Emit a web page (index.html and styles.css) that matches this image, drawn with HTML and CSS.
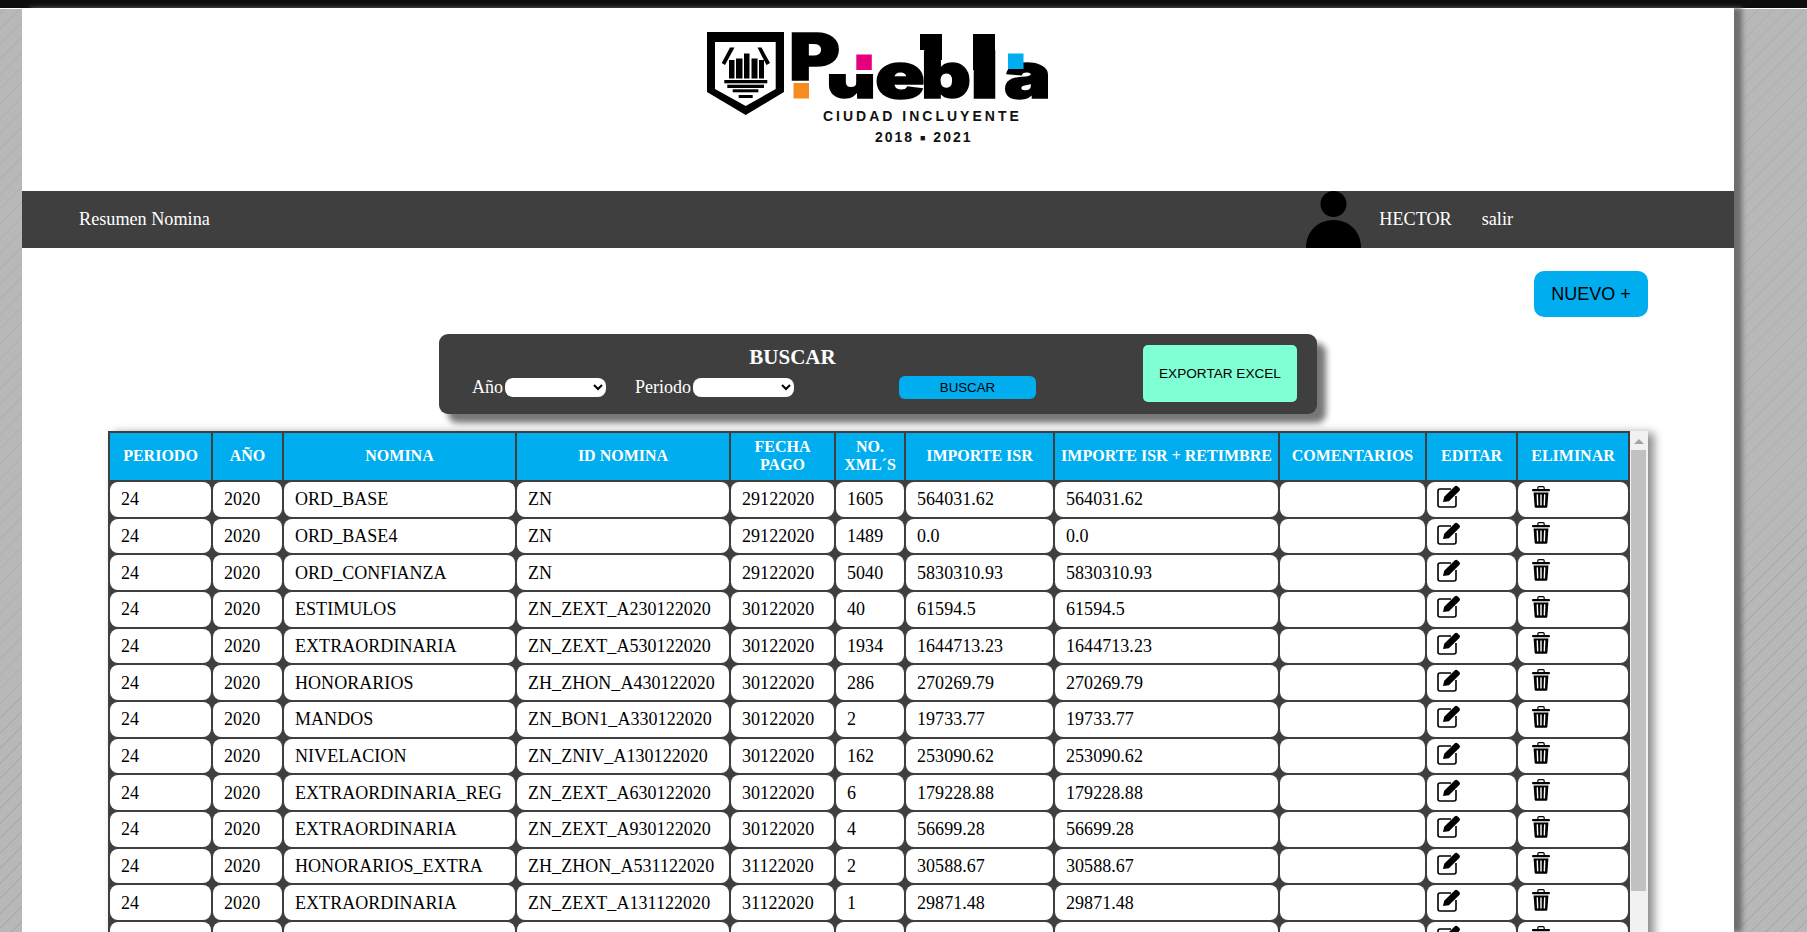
FILE: index.html
```html
<!DOCTYPE html>
<html lang="en">
<head>
    <meta charset="UTF-8">
    <meta name="viewport" content="width=device-width, initial-scale=1.0">
    <title>Resumen Nomina</title>
    <link rel="stylesheet" href="styles.css">
</head>
<body>

<svg class="sprite" width="0" height="0">
    <defs>
        <symbol id="icon-edit" viewBox="0 0 24 23">
            <path d="M14 4H3a2 2 0 0 0-2 2v14a2 2 0 0 0 2 2h14a2 2 0 0 0 2-2V11" fill="none" stroke="#000" stroke-width="1.6"/>
            <path d="M6 17l1.2-5.2L17.6 1.4c.9-.9 2.2-.9 3.1 0l1.6 1.6c.9.9.9 2.2 0 3.1L11.900 16.200z" fill="#000"/>
        </symbol>
        <symbol id="icon-trash" viewBox="0 0 18 22">
            <path d="M5.800 3V2C5.800 1 6.400.6 7 .6h4c.6 0 1.200.4 1.200 1.400v1" fill="none" stroke="#000" stroke-width="1.200"/>
            <rect x="0" y="3" width="18" height="2.200" rx="1" fill="#000"/>
            <path d="M1.600 6.400h14.800l-1 14c-.1.9-.7 1.400-1.500 1.400H4.100c-.8 0-1.400-.5-1.500-1.400z" fill="#000"/>
            <path d="M5.300 8.400l.4 11M9 8.400v11M12.700 8.400l-.4 11" fill="none" stroke="#fff" stroke-width="1.400"/>
        </symbol>
    </defs>
</svg>

<div class="top-bar"></div>

<div class="page">
    <header class="logo-area">
        <svg class="logo" viewBox="677 8 403 183" width="403" height="183">
            <!-- shield -->
            <path d="M707 32H784V92L745.700 115L707 92Z" fill="#000"/>
            <path d="M715 42H775.700V89L745.700 106L715 89Z" fill="#fff"/>
            <path d="M721.700 63L730 47.500H734.500L725 65ZM757.500 47.500H761.500L770 63L766.500 65Z" fill="#000"/>
            <rect x="729" y="60" width="5.500" height="18.500" fill="#000"/>
            <rect x="736" y="58.500" width="6.500" height="20" fill="#000"/>
            <rect x="744" y="53.500" width="5.500" height="25" fill="#000"/>
            <rect x="751.500" y="58.500" width="6" height="20" fill="#000"/>
            <rect x="759" y="60" width="5" height="18.500" fill="#000"/>
            <rect x="724.300" y="80" width="43" height="3.300" fill="#000"/>
            <rect x="727.300" y="84.700" width="36.700" height="3.300" fill="#000"/>
            <rect x="732.700" y="89.300" width="25.700" height="3" fill="#000"/>
            <rect x="738.700" y="95" width="14" height="3" fill="#000"/>
            <!-- wordmark -->
            <clipPath id="u-clip"><rect x="820" y="74" width="60" height="30"/></clipPath>
            <text class="logo-word logo-cap" x="789" y="80" textLength="51" lengthAdjust="spacingAndGlyphs">P</text>
            <text class="logo-word" x="826" y="98" textLength="50" lengthAdjust="spacingAndGlyphs" clip-path="url(#u-clip)">u</text>
            <text class="logo-word" x="875" y="98" textLength="50" lengthAdjust="spacingAndGlyphs">e</text>
            <text class="logo-word" x="921" y="98" textLength="50" lengthAdjust="spacingAndGlyphs">b</text>
            <text class="logo-word" x="970" y="98" textLength="29" lengthAdjust="spacingAndGlyphs">l</text>
            <text class="logo-word" x="1004" y="98" textLength="47" lengthAdjust="spacingAndGlyphs">a</text>
            <path d="M920 34H942V60H925V50H920ZM973 34H995V70H973Z" fill="#000"/>
            <rect x="793.500" y="83" width="15.500" height="15.500" fill="#f68b1f"/>
            <rect x="856.300" y="54.500" width="15.500" height="15.500" fill="#e6007e"/>
            <rect x="1008" y="53.500" width="15.500" height="15.500" fill="#00aeef"/>
            <text class="logo-motto" x="823" y="121">CIUDAD INCLUYENTE</text>
            <text class="logo-years" x="875" y="142">2018 <tspan class="logo-dot" dy="-1.500">■</tspan><tspan dy="1.500"> 2021</tspan></text>
        </svg>
    </header>

    <nav class="nav-bar">
        <a class="nav-link" href="#">Resumen Nomina</a>
        <div class="nav-user">
            <svg class="avatar" viewBox="0 0 55 57" width="55" height="57">
                <circle cx="27.500" cy="13" r="13" fill="#000"/>
                <path d="M0 57C0 40 12 29 27.500 29S55 40 55 57Z" fill="#000"/>
            </svg>
            <span class="nav-name">HECTOR</span>
            <a class="nav-link" href="#">salir</a>
        </div>
    </nav>

    <div class="actions">
        <button class="btn-new">NUEVO +</button>
    </div>

    <section class="search-box">
        <div class="search-main">
            <h3>BUSCAR</h3>
            <div class="search-row">
                <label>Año<select></select></label>
                <label>Periodo<select></select></label>
                <button class="btn-search">BUSCAR</button>
            </div>
        </div>
        <button class="btn-export">EXPORTAR EXCEL</button>
    </section>

    <div class="table-wrap">
        <table>
            <colgroup>
                <col class="c-periodo"><col class="c-anio"><col class="c-nomina"><col class="c-id">
                <col class="c-fecha"><col class="c-xml"><col class="c-isr"><col class="c-ret">
                <col class="c-com"><col class="c-edit"><col class="c-del">
            </colgroup>
            <thead>
                <tr>
                    <th>PERIODO</th><th>AÑO</th><th>NOMINA</th><th>ID NOMINA</th><th>FECHA<br>PAGO</th><th>NO.<br>XML´S</th>
                    <th>IMPORTE ISR</th><th>IMPORTE ISR + RETIMBRE</th><th>COMENTARIOS</th><th>EDITAR</th><th>ELIMINAR</th>
                </tr>
            </thead>
            <tbody>
                <tr><td>24</td><td>2020</td><td>ORD_BASE</td><td>ZN</td><td>29122020</td><td>1605</td><td>564031.62</td><td>564031.62</td><td></td><td><svg class="ico-edit"><use href="#icon-edit"/></svg></td><td><svg class="ico-trash"><use href="#icon-trash"/></svg></td></tr>
                <tr><td>24</td><td>2020</td><td>ORD_BASE4</td><td>ZN</td><td>29122020</td><td>1489</td><td>0.0</td><td>0.0</td><td></td><td><svg class="ico-edit"><use href="#icon-edit"/></svg></td><td><svg class="ico-trash"><use href="#icon-trash"/></svg></td></tr>
                <tr><td>24</td><td>2020</td><td>ORD_CONFIANZA</td><td>ZN</td><td>29122020</td><td>5040</td><td>5830310.93</td><td>5830310.93</td><td></td><td><svg class="ico-edit"><use href="#icon-edit"/></svg></td><td><svg class="ico-trash"><use href="#icon-trash"/></svg></td></tr>
                <tr><td>24</td><td>2020</td><td>ESTIMULOS</td><td>ZN_ZEXT_A230122020</td><td>30122020</td><td>40</td><td>61594.5</td><td>61594.5</td><td></td><td><svg class="ico-edit"><use href="#icon-edit"/></svg></td><td><svg class="ico-trash"><use href="#icon-trash"/></svg></td></tr>
                <tr><td>24</td><td>2020</td><td>EXTRAORDINARIA</td><td>ZN_ZEXT_A530122020</td><td>30122020</td><td>1934</td><td>1644713.23</td><td>1644713.23</td><td></td><td><svg class="ico-edit"><use href="#icon-edit"/></svg></td><td><svg class="ico-trash"><use href="#icon-trash"/></svg></td></tr>
                <tr><td>24</td><td>2020</td><td>HONORARIOS</td><td>ZH_ZHON_A430122020</td><td>30122020</td><td>286</td><td>270269.79</td><td>270269.79</td><td></td><td><svg class="ico-edit"><use href="#icon-edit"/></svg></td><td><svg class="ico-trash"><use href="#icon-trash"/></svg></td></tr>
                <tr><td>24</td><td>2020</td><td>MANDOS</td><td>ZN_BON1_A330122020</td><td>30122020</td><td>2</td><td>19733.77</td><td>19733.77</td><td></td><td><svg class="ico-edit"><use href="#icon-edit"/></svg></td><td><svg class="ico-trash"><use href="#icon-trash"/></svg></td></tr>
                <tr><td>24</td><td>2020</td><td>NIVELACION</td><td>ZN_ZNIV_A130122020</td><td>30122020</td><td>162</td><td>253090.62</td><td>253090.62</td><td></td><td><svg class="ico-edit"><use href="#icon-edit"/></svg></td><td><svg class="ico-trash"><use href="#icon-trash"/></svg></td></tr>
                <tr><td>24</td><td>2020</td><td>EXTRAORDINARIA_REG</td><td>ZN_ZEXT_A630122020</td><td>30122020</td><td>6</td><td>179228.88</td><td>179228.88</td><td></td><td><svg class="ico-edit"><use href="#icon-edit"/></svg></td><td><svg class="ico-trash"><use href="#icon-trash"/></svg></td></tr>
                <tr><td>24</td><td>2020</td><td>EXTRAORDINARIA</td><td>ZN_ZEXT_A930122020</td><td>30122020</td><td>4</td><td>56699.28</td><td>56699.28</td><td></td><td><svg class="ico-edit"><use href="#icon-edit"/></svg></td><td><svg class="ico-trash"><use href="#icon-trash"/></svg></td></tr>
                <tr><td>24</td><td>2020</td><td>HONORARIOS_EXTRA</td><td>ZH_ZHON_A531122020</td><td>31122020</td><td>2</td><td>30588.67</td><td>30588.67</td><td></td><td><svg class="ico-edit"><use href="#icon-edit"/></svg></td><td><svg class="ico-trash"><use href="#icon-trash"/></svg></td></tr>
                <tr><td>24</td><td>2020</td><td>EXTRAORDINARIA</td><td>ZN_ZEXT_A131122020</td><td>31122020</td><td>1</td><td>29871.48</td><td>29871.48</td><td></td><td><svg class="ico-edit"><use href="#icon-edit"/></svg></td><td><svg class="ico-trash"><use href="#icon-trash"/></svg></td></tr>
                <tr><td></td><td></td><td></td><td></td><td></td><td></td><td></td><td></td><td></td><td><svg class="ico-edit"><use href="#icon-edit"/></svg></td><td><svg class="ico-trash"><use href="#icon-trash"/></svg></td></tr>
            </tbody>
        </table>
        <div class="scrollbar">
            <div class="scroll-btn"><span class="scroll-arrow"></span></div>
            <div class="scroll-thumb"></div>
        </div>
    </div>
</div>

</body>
</html>
```

FILE: styles.css
```css
html, body {
    height: 100%;
    margin: 0;
    overflow: hidden;
}
body {
    font-family: "Liberation Serif", "Times New Roman", serif;
    background-color: #b7b7b7;
    background-image: repeating-linear-gradient(135deg, #b8b8b8 0, #b8b8b8 9.5px, #acacac 9.5px, #acacac 10.6px);
}
.sprite {
    display: block;
}
.top-bar {
    height: 8px;
    background-color: #0d0d0d;
    box-shadow: 0 1px 0 #fff;
}
.page {
    position: relative;
    width: 1712px;
    height: 924px;
    margin-left: 22px;
    background-color: #fff;
    box-shadow: 8px 0 5px #6e6e6e;
    overflow: hidden;
}
.logo-area {
    height: 183px;
    display: flex;
    justify-content: center;
}
.logo {
    display: block;
}
.logo-word {
    font-family: Inter, "Liberation Sans", sans-serif;
    font-weight: 900;
    font-size: 64px;
    fill: #000;
    stroke: #000;
    stroke-width: 1.5px;
}
.logo-motto {
    font-family: "Liberation Sans", Arial, sans-serif;
    font-weight: bold;
    font-size: 14px;
    letter-spacing: 3px;
    fill: #111;
}
.logo-years {
    font-family: "Liberation Sans", Arial, sans-serif;
    font-weight: bold;
    font-size: 14px;
    letter-spacing: 2px;
    fill: #111;
}
.logo-dot {
    font-size: 9px;
}
.nav-bar {
    height: 57px;
    display: flex;
    align-items: center;
    justify-content: space-between;
    padding: 0 221px 0 57px;
    background-color: #3f3f3f;
    font-size: 18.2px;
    color: #fff;
}
.nav-link {
    color: #fff;
    text-decoration: none;
}
.nav-user {
    display: flex;
    align-items: center;
    gap: 28px;
}
.nav-name {
    margin-right: 2px;
}
.avatar {
    display: block;
    margin-right: -10px;
}
.actions {
    display: flex;
    justify-content: flex-end;
    padding: 23px 86px 0 0;
}
.btn-new {
    width: 114px;
    height: 46px;
    border: none;
    border-radius: 10px;
    background-color: #00adef;
    font-family: "Liberation Sans", Arial, sans-serif;
    font-size: 18px;
    color: #000;
}
.search-box {
    width: 878px;
    height: 80px;
    box-sizing: border-box;
    margin: 17px 0 17px 417px;
    padding: 11px 20px 0 33px;
    display: flex;
    align-items: flex-start;
    justify-content: space-between;
    border-radius: 9px;
    background-color: #3f3f3f;
    box-shadow: 9px 9px 6px #777;
    color: #fff;
}
.search-main {
    width: 641px;
}
.search-main h3 {
    margin: 0 0 7px;
    text-align: center;
    font-size: 21px;
    line-height: 24px;
}
.search-row {
    display: flex;
    align-items: center;
    font-size: 18px;
}
.search-row label {
    display: flex;
    align-items: center;
    margin-right: 29px;
}
.search-row select {
    width: 101px;
    height: 19px;
    margin-left: 2px;
    border: none;
    border-radius: 8px;
    background-color: #fff;
}
.btn-search {
    width: 137px;
    height: 23px;
    margin-left: 76px;
    border: none;
    border-radius: 6px;
    background-color: #00adef;
    font-family: "Liberation Sans", Arial, sans-serif;
    font-size: 13.3px;
    color: #000;
}
.btn-export {
    width: 154px;
    height: 57px;
    border: none;
    border-radius: 5px;
    background-color: #7fffd4;
    font-family: "Liberation Sans", Arial, sans-serif;
    font-size: 13.6px;
    color: #000;
}
.table-wrap {
    width: 1540px;
    height: 520px;
    margin-left: 86px;
    display: flex;
    align-items: flex-start;
    overflow: hidden;
    box-shadow: 6px 2px 9px #8a8a8a;
}
.scrollbar {
    width: 18px;
    height: 100%;
    flex: none;
    background-color: #f1f1f1;
}
.scroll-btn {
    height: 19px;
    display: flex;
    justify-content: center;
    padding-top: 8px;
    box-sizing: border-box;
}
.scroll-arrow {
    width: 0;
    height: 0;
    border-left: 5px solid transparent;
    border-right: 5px solid transparent;
    border-bottom: 5px solid #a3a3a3;
}
.scroll-thumb {
    width: 15px;
    height: 441px;
    margin-left: 1px;
    background-color: #c1c1c1;
}
table {
    width: 1522px;
    flex: none;
    table-layout: fixed;
    border-collapse: separate;
    border-spacing: 2px;
    background-color: #3f3f3f;
}
.c-periodo { width: 101px; }
.c-anio { width: 69px; }
.c-nomina { width: 231px; }
.c-id { width: 212px; }
.c-fecha { width: 103px; }
.c-xml { width: 68px; }
.c-isr { width: 147px; }
.c-ret { width: 223px; }
.c-com { width: 145px; }
.c-edit { width: 89px; }
.c-del { width: 110px; }
th {
    height: 47px;
    padding: 0 0 2px;
    box-sizing: border-box;
    background-color: #00adef;
    color: #fff;
    font-size: 16px;
    font-weight: bold;
    text-align: center;
}
td {
    height: 34.67px;
    padding: 1px 0 0 11px;
    box-sizing: border-box;
    border-radius: 8px;
    background-color: #fff;
    font-size: 18px;
    letter-spacing: 0.05px;
    color: #000;
    white-space: nowrap;
}
.ico-edit {
    display: block;
    width: 24px;
    height: 23px;
    margin: 0 0 6px -1px;
}
.ico-trash {
    display: block;
    width: 18px;
    height: 22px;
    margin: 0 0 6px 3px;
}
```
